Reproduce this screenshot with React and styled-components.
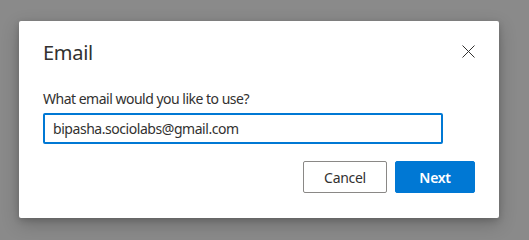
import React, { useState } from 'react';
import styled, { createGlobalStyle } from 'styled-components';

const GlobalStyle = createGlobalStyle`
  html, body {
    margin: 0;
    padding: 0;
  }
  body {
    font-family: "Noto Sans", "Open Sans", sans-serif;
    color: #323130;
  }
`;

const Backdrop = styled.div`
  width: 529px;
  height: 240px;
  box-sizing: border-box;
  background: #8a8a8a;
  padding: 21px 0 0 19px;
`;

const Dialog = styled.div`
  width: 480px;
  height: 197px;
  box-sizing: border-box;
  background: #ffffff;
  border-radius: 2px;
  box-shadow: 0 6px 18px rgba(0, 0, 0, 0.22), 0 2px 6px rgba(0, 0, 0, 0.16);
  padding: 18px 24px 24px 24px;
  display: flex;
  flex-direction: column;
`;

const Header = styled.div`
  display: flex;
  justify-content: space-between;
  align-items: center;
  height: 28px;
`;

const Title = styled.h2`
  margin: 0;
  font-size: 20px;
  font-weight: 400;
  line-height: 28px;
  letter-spacing: -0.3px;
  color: #323130;
`;

const CloseButton = styled.button`
  border: none;
  background: none;
  padding: 0;
  margin: -4px 0 0 0;
  width: 14px;
  height: 14px;
  display: flex;
  align-items: center;
  justify-content: center;
  cursor: pointer;
`;

const Label = styled.label`
  margin-top: 22px;
  font-size: 14px;
  line-height: 20px;
  letter-spacing: -0.5px;
  color: #323130;
`;

const Input = styled.input`
  margin-top: 4px;
  width: 400px;
  height: 31px;
  box-sizing: border-box;
  border: 2px solid #0078d4;
  border-radius: 2px;
  padding: 0 8px;
  font-family: inherit;
  font-size: 14px;
  letter-spacing: -0.45px;
  color: #323130;
  outline: none;
`;

const Actions = styled.div`
  margin-top: 17px;
  display: flex;
  justify-content: flex-end;
  gap: 8px;
`;

const Button = styled.button`
  height: 32px;
  box-sizing: border-box;
  border-radius: 2px;
  font-family: inherit;
  font-size: 14px;
  letter-spacing: -0.3px;
  padding: 0;
  width: ${(p) => (p.$primary ? '80px' : '84px')};
  font-weight: ${(p) => (p.$primary ? 600 : 400)};
  color: ${(p) => (p.$primary ? '#ffffff' : '#323130')};
  background: ${(p) => (p.$primary ? '#0078d4' : '#ffffff')};
  border: 1px solid ${(p) => (p.$primary ? '#0078d4' : '#8a8886')};
  cursor: pointer;
`;

export default function App() {
  const [email, setEmail] = useState('bipasha.sociolabs@gmail.com');

  return (
    <>
      <GlobalStyle />
      <Backdrop>
        <Dialog>
          <Header>
            <Title>Email</Title>
            <CloseButton aria-label="Close">
              <svg width="13" height="13" viewBox="0 0 13 13">
                <path d="M0.5 0.5 L12.5 12.5 M12.5 0.5 L0.5 12.5" stroke="#323130" strokeWidth="1" fill="none" />
              </svg>
            </CloseButton>
          </Header>
          <Label htmlFor="email">What email would you like to use?</Label>
          <Input id="email" value={email} onChange={(e) => setEmail(e.target.value)} />
          <Actions>
            <Button>Cancel</Button>
            <Button $primary>Next</Button>
          </Actions>
        </Dialog>
      </Backdrop>
    </>
  );
}
